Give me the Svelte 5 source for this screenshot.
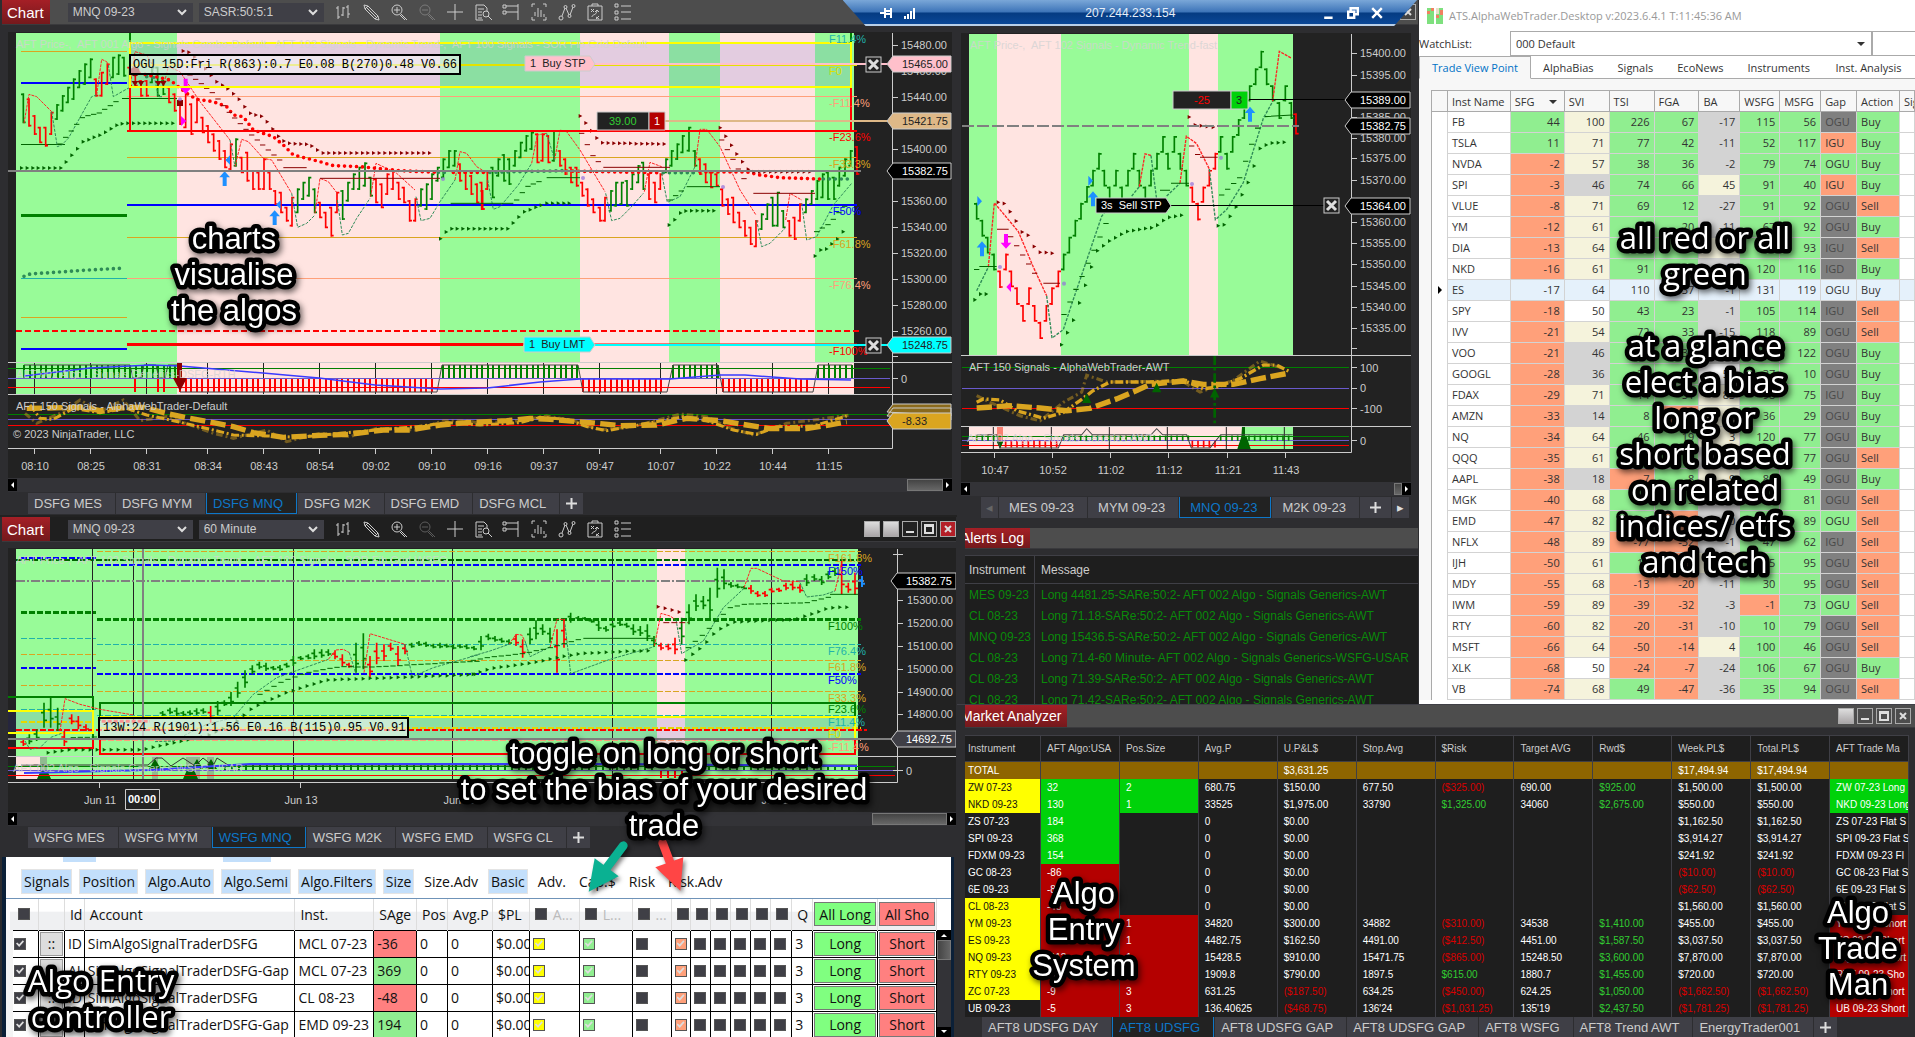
<script lang="ts">
  type Point = [number, number]
  type Bar = { x: number; hi: number; lo: number; c: string; up: boolean }

  // walk a polyline and return evenly spaced points along x
  function along(pts: Point[], step: number): Point[] {
    const out: Point[] = []
    let seg = 0
    for (let x = pts[0][0]; x <= pts[pts.length - 1][0]; x += step) {
      while (seg < pts.length - 2 && x > pts[seg + 1][0]) seg++
      const [x0, y0] = pts[seg]
      const [x1, y1] = pts[seg + 1]
      out.push([Math.round(x), Math.round(y0 + ((x - x0) / (x1 - x0)) * (y1 - y0))])
    }
    return out
  }

  function points(s: string): Point[] {
    return s.split(' ').map((p) => p.split(',').map(Number) as Point)
  }

  const triangles = (s: string, step: number) =>
    along(points(s), step).map(([x, y]) => `M${x - 5} ${y - 6}l11 6-11 6z`).join('')

  const dashes = (s: string, step: number) =>
    along(points(s), step).map(([x, y]) => `M${x - 8} ${y}h16`).join('')

  // "x,hi,lo" records; r/g/b switches the colour for what follows
  function bars(s: string): Bar[] {
    let c = 'g'
    const out: Bar[] = []
    for (const tok of s.split(' ')) {
      if (tok.length === 1) { c = tok; continue }
      const [x, hi, lo] = tok.split(',').map(Number)
      const prev = out[out.length - 1]
      out.push({ x, hi, lo, c, up: prev ? hi + lo < prev.hi + prev.lo : false })
    }
    return out
  }

  // fixed spacing variant: "hi,lo" records
  function spaced(s: string, x0: number, step: number): Bar[] {
    let i = 0
    return bars(s.split(' ').map((t) => (t.length === 1 ? t : `${Math.round(x0 + step * i++)},${t}`)).join(' '))
  }

  // open tick on the left, close tick on the right
  const barPath = (list: Bar[], c: string, tick: number) =>
    list.filter((b) => b.c === c)
      .map((b) => `M${b.x} ${b.hi}V${b.lo}M${b.x} ${b.hi + 3}h${b.up ? tick : -tick}M${b.x} ${b.lo - 3}h${b.up ? -tick : tick}`)
      .join('')

  const crossPath = (list: Bar[], c: string) =>
    list.filter((b) => b.c === c)
      .map((b) => `M${b.x} ${b.hi}V${b.lo}M${b.x - 9} ${Math.round(b.hi * 0.6 + b.lo * 0.4)}h9M${b.x} ${Math.round(b.hi * 0.3 + b.lo * 0.7)}h9`)
      .join('')

  function comb(from: number, to: number, step: number, y: number, h: number) {
    let d = ''
    for (let x = from; x <= to; x += step) d += `M${Math.round(x)} ${y}v${h}`
    return d
  }

  const dayLeft = spaced('g 280,370 r 295,380 345,405 380,430 380,440 335,405 g 312,360 285,335 260,310 235,300 210,265 190,255 175,235 r 235,290 215,290 190,255 g 170,235 163,225 170,230 r 200,260 205,260 240,290 240,290 g 200,250 200,290 240,285 r 260,310 280,335 300,375 265,385 310,405 295,370 350,400 375,430 400,455 420,480 450,505 430,510 g 415,500 r 470,520 455,545 510,570 515,570 475,570 515,570 570,615 575,640 620,665 590,680 g 565,640 545,600 530,590 565,640 r 605,655 635,685 620,710 575,640 g 570,660 545,605 520,570 500,570 487,560 530,590 r 535,610 550,625 520,585 510,570 545,600 560,610 600,665 595,665 g 565,620 550,630 520,600 500,545 475,535 450,505 450,500 r 490,545 515,570 525,585 550,610 570,630', 70, 16.8)
  const dayRight = bars('r 5,545,630 22,515,570 g 38,500,595 55,475,530 72,462,545 88,475,555 105,450,500 122,425,475 139,405,455 155,395,450 r 172,400,490 188,400,485 205,405,490 g 222,390,485 r 240,450,500 256,475,525 273,500,550 290,500,560 307,545,590 323,565,620 340,595,640 360,620,665 375,590,665 g 393,570,635 408,545,620 425,545,615 441,540,620 457,520,570 475,495,550 490,485,570 r 507,520,600 525,545,610 541,520,570 g 558,475,520 575,450,500 592,430,480 608,405,460 627,380,455 645,450,500 r 660,475,525 677,490,550 693,515,565 710,520,560 727,565,620 744,595,645 760,590,670 778,635,685 795,660,710 812,680,735 828,660,742 g 845,640,690 862,610,660 878,590,680 893,575,680 910,630,685 r 928,660,710 944,650,720 960,610,665 g 978,595,640 995,570,615 1012,540,600 1028,520,595 1044,515,600 1062,530,600 1078,500,560 1095,475,530 1112,450,500 r 1131,438,525')
  const hourLeft = bars('r 70,685,705 g 88,670,700 110,655,690 132,575,650 152,560,650 173,590,660 r 193,660,705 215,610,640 235,615,655 258,640,660 g 488,600,615 510,590,610 530,590,615 550,600,615 570,598,612 590,592,612 610,592,608 r 632,585,635 g 653,570,612 673,568,585 693,543,585 713,512,560 735,478,530 757,463,490 778,452,475 798,455,480 820,465,478 840,462,480 860,455,470 880,435,465 902,435,447 925,430,445 943,415,445 965,415,440 985,415,435 r 1005,418,445 1027,430,465 1047,455,470 g 1068,395,485 1090,367,475 r 1110,435,500 1130,395,460 1152,400,450 1172,395,420 1194,405,465 1215,400,430 g 1235,395,410 1257,390,405 1278,392,408 1300,398,412 1320,395,412 1340,398,410 1360,400,415 1380,400,412 1400,400,415')
  const hourRight = bars('g 12,405,418 33,375,418 55,368,388 75,375,392 95,380,395 117,385,400 r 138,370,405 158,385,440 g 180,350,400 198,328,385 218,340,372 240,350,395 r 261,355,485 282,325,410 g 302,305,335 325,315,330 345,318,328 365,325,335 386,330,360 408,345,362 428,335,350 450,330,345 470,335,350 490,340,372 511,345,375 532,340,390 552,375,408 r 573,395,418 595,398,418 615,380,430 g 635,320,400 657,280,340 678,250,300 700,255,295 720,230,325 742,170,260 762,175,235 783,213,230 803,218,232 822,225,235 r 843,222,248 863,240,258 885,240,258 905,230,245 927,230,243 948,215,238 968,210,238 990,220,245 g 1010,190,225 1033,190,210 1055,195,222 1075,180,205 1095,170,195 r 1115,150,250 1135,215,245 1155,185,252 b 1176,195,228')
  const renko = bars('g 80,600,650 97,650,700 113,700,750 132,750,800 r 150,800,852 168,750,800 184,800,850 201,850,902 219,902,952 237,850,902 254,902,952 271,952,1003 289,902,952 306,850,902 325,800,850 g 341,750,800 358,700,750 376,650,700 393,600,650 411,550,600 429,502,552 447,452,502 463,502,552 479,552,600 498,502,552 516,552,600 534,502,552 551,452,502 568,502,552 586,552,600 603,502,552 621,452,502 639,402,452 654,452,502 673,402,452 691,452,502 709,502,552 r 727,552,600 744,600,652 760,552,600 778,502,552 796,452,502 g 812,402,452 831,452,502 848,402,452 866,352,402 883,302,352 899,252,300 917,202,252 934,150,202 950,202,252 968,252,300 988,302,352 1006,252,300 1024,302,352 r 1038,335,398')

  const dayTimes: [number, string][] = [[34, '08:10'], [90, '08:25'], [146, '08:31'], [207, '08:34'], [263, '08:43'], [319, '08:54'], [375, '09:02'], [431, '09:10'], [487, '09:16'], [543, '09:37'], [599, '09:47'], [660, '10:07'], [716, '10:22'], [772, '10:44'], [828, '11:15']]
  const dayPrices: [number, string][] = [[45, '15480.00'], [71, '15460.00'], [97, '15440.00'], [149, '15400.00'], [201, '15360.00'], [227, '15340.00'], [253, '15320.00'], [279, '15300.00'], [305, '15280.00'], [331, '15260.00']]
  const dayFibs: [number, string, string][] = [[43, 'F11.4%', '#20b2aa'], [75, 'F0', '#dce000'], [107, '-F11.4%', '#ffa07a'], [141, '-F23.6%', '#f00'], [168, '-F33.3%', '#daa520'], [215, '-F50%', '#00f'], [248, '-F61.8%', '#daa520'], [289, '-F76.4%', '#ffa07a'], [355, '-F100%', '#f00']]
  const hourPrices: [number, string][] = [[599, '15300.00'], [622, '15200.00'], [645, '15100.00'], [668, '15000.00'], [691, '14900.00'], [713, '14800.00']]
  const hourFibs: [number, string, string][] = [[561, 'F161.8%', '#daa520'], [574, 'F150%', '#00f'], [629, 'F100%', '#008000'], [654, 'F76.4%', '#20b2aa'], [670, 'F61.8%', '#daa520'], [683, 'F50%', '#00f'], [701, 'F33.3%', '#daa520'], [712, 'F23.6%', '#008000'], [725, 'F11.4%', '#20b2aa'], [737, 'F0', '#dce000'], [750, '-F11.4%', '#ffa07a']]
  const renkoPrices: [number, string][] = [[53, '15400.00'], [75, '15395.00'], [117, '15385.00'], [138, '15380.00'], [158, '15375.00'], [180, '15370.00'], [222, '15360.00'], [243, '15355.00'], [264, '15350.00'], [286, '15345.00'], [307, '15340.00'], [328, '15335.00']]
  const renkoTimes: [number, string][] = [[994, '10:47'], [1052, '10:52'], [1110, '11:02'], [1168, '11:12'], [1227, '11:21'], [1285, '11:43']]

  // name, SFG, SVI, TSI, FGA, BA, WSFG, MSFG, gap, gap tone, action
  const watch: [string, number, number, number, number, number, number, number, string, string, string][] = [
    ['FB', 44, 100, 226, 67, -17, 115, 56, 'OGU', 'dim', 'Buy'],
    ['TSLA', 11, 71, 77, 42, -11, 52, 117, 'IGU', 'down', 'Buy'],
    ['NVDA', -2, 57, 38, 36, -2, 79, 74, 'OGU', 'up', 'Buy'],
    ['SPI', -3, 46, 74, 66, 45, 91, 40, 'IGU', 'down', 'Buy'],
    ['VLUE', -8, 71, 69, 12, -27, 91, 92, 'OGU', 'dim', 'Sell'],
    ['YM', -12, 61, 41, 20, -11, 67, 92, 'OGU', 'dim', 'Buy'],
    ['DIA', -13, 64, 42, 18, 7, 75, 93, 'IGU', 'dim', 'Sell'],
    ['NKD', -16, 61, 91, 54, -12, 120, 116, 'IGD', 'dim', 'Buy'],
    ['ES', -17, 64, 110, 37, -1, 131, 119, 'OGU', 'none', 'Buy'],
    ['SPY', -18, 50, 43, 23, -1, 105, 114, 'IGU', 'dim', 'Sell'],
    ['IVV', -21, 54, 72, 33, -15, 118, 89, 'OGU', 'dim', 'Sell'],
    ['VOO', -21, 46, 71, 31, -12, 104, 122, 'OGU', 'dim', 'Buy'],
    ['GOOGL', -28, 36, 21, 14, 50, 37, 10, 'OGU', 'dim', 'Buy'],
    ['FDAX', -29, 71, 14, 51, 83, 98, 75, 'IGU', 'dim', 'Buy'],
    ['AMZN', -33, 14, 8, -5, 12, 36, 29, 'OGU', 'dim', 'Buy'],
    ['NQ', -34, 64, 46, 19, 3, 120, 77, 'OGU', 'dim', 'Buy'],
    ['QQQ', -35, 61, 40, 12, -6, 112, 77, 'OGU', 'dim', 'Sell'],
    ['AAPL', -38, 18, -7, 8, 9, 85, 49, 'OGU', 'dim', 'Buy'],
    ['MGK', -40, 68, 31, 15, -8, 96, 81, 'OGU', 'dim', 'Sell'],
    ['EMD', -47, 82, 20, -11, -10, 44, 89, 'OGU', 'up', 'Sell'],
    ['NFLX', -48, 89, -77, -32, -1, 47, 62, 'IGU', 'dim', 'Sell'],
    ['IJH', -50, 61, 11, -8, 4, 35, 95, 'OGU', 'dim', 'Sell'],
    ['MDY', -55, 68, -13, -20, -11, 30, 95, 'OGU', 'dim', 'Sell'],
    ['IWM', -59, 89, -39, -32, -3, -1, 73, 'OGU', 'up', 'Sell'],
    ['RTY', -60, 82, -20, -31, -10, 10, 79, 'OGU', 'dim', 'Sell'],
    ['MSFT', -66, 64, -50, -14, 4, 100, 46, 'OGU', 'dim', 'Sell'],
    ['XLK', -68, 50, -24, -7, -24, 106, 67, 'OGU', 'dim', 'Buy'],
    ['VB', -74, 68, 49, -47, -36, 35, 94, 'OGU', 'dim', 'Sell'],
  ]
  const watchCols = ['Inst Name', 'SFG', 'SVI', 'TSI', 'FGA', 'BA', 'WSFG', 'MSFG', 'Gap', 'Action', 'Sig']

  function tone(col: number, v: number) {
    if (col === 1 || col === 4) return v === 50 ? 'none' : v > 50 || (col === 4 && v > 0) ? 'warm' : 'flat'
    return v > 0 ? 'up' : 'down'
  }

  const alerts = [
    ['MES 09-23', 'Long 4481.25-SARe:50:2- AFT 002 Algo - Signals Generics-AWT'],
    ['CL 08-23', 'Long 71.18-SARe:50:2- AFT 002 Algo - Signals Generics-AWT'],
    ['MNQ 09-23', 'Long 15436.5-SARe:50:2- AFT 002 Algo - Signals Generics-AWT'],
    ['CL 08-23', 'Long 71.4-60 Minute- AFT 002 Algo - Signals Generics-WSFG-USAR'],
    ['CL 08-23', 'Long 71.39-SARe:50:2- AFT 002 Algo - Signals Generics-AWT'],
    ['CL 08-23', 'Long 71.42-SARe:50:2- AFT 002 Algo - Signals Generics-AWT'],
  ]

  const marketCols = ['Instrument', 'AFT Algo:USA', 'Pos.Size', 'Avg.P', 'U.P&L$', 'Stop.Avg', '$Risk', 'Target AVG', 'Rwd$', 'Week.PL$', 'Total.PL$', 'AFT Trade Ma']
  const market = [
    ['ZW 07-23', '32', '2', '680.75', '$150.00', '677.50', '($325.00)', '690.00', '$925.00', '$1,500.00', '$1,500.00', 'ZW 07-23 Long'],
    ['NKD 09-23', '130', '1', '33525', '$1,975.00', '33790', '$1,325.00', '34060', '$2,675.00', '$550.00', '$550.00', 'NKD 09-23 Long'],
    ['ZS 07-23', '184', '', '0', '$0.00', '', '', '', '', '$1,162.50', '$1,162.50', 'ZS 07-23 Flat S'],
    ['SPI 09-23', '368', '', '0', '$0.00', '', '', '', '', '$3,914.27', '$3,914.27', 'SPI 09-23 Flat S'],
    ['FDXM 09-23', '154', '', '0', '$0.00', '', '', '', '', '$241.92', '$241.92', 'FDXM 09-23 Fl'],
    ['GC 08-23', '-86', '', '0', '$0.00', '', '', '', '', '($10.00)', '($10.00)', 'GC 08-23 Flat S'],
    ['6E 09-23', '-80', '', '0', '$0.00', '', '', '', '', '($62.50)', '($62.50)', '6E 09-23 Flat S'],
    ['CL 08-23', '-48', '', '0', '$0.00', '', '', '', '', '$1,560.00', '$1,560.00', 'CL 08-23 Flat S'],
    ['YM 09-23', '-12', '1', '34820', '$300.00', '34882', '($310.00)', '34538', '$1,410.00', '$455.00', '$455.00', 'YM 09-23 Short'],
    ['ES 09-23', '-17', '1', '4482.75', '$162.50', '4491.00', '($412.50)', '4451.00', '$1,587.50', '$3,037.50', '$3,037.50', 'ES 09-23 Short'],
    ['NQ 09-23', '-113', '1', '15428.5', '$910.00', '15471.75', '($865.00)', '15248.50', '$3,600.00', '$7,870.00', '$7,870.00', 'NQ 09-23 Short'],
    ['RTY 09-23', '-60', '2', '1909.8', '$790.00', '1897.5', '$615.00', '1880.7', '$1,455.00', '$720.00', '$720.00', 'RTY 09-23 Sho'],
    ['ZC 07-23', '-9', '3', '631.25', '($187.50)', '634.25', '($450.00)', '624.25', '$1,050.00', '($1,662.50)', '($1,662.50)', 'ZC 07-23 Short'],
    ['UB 09-23', '-5', '3', '136.40625', '($468.75)', "136'24", '($1,031.25)', "135'19", '$2,437.50', '($1,781.25)', '($1,781.25)', 'UB 09-23 Short'],
  ]
  const totals = ['TOTAL', '', '', '', '$3,631.25', '', '', '', '', '$17,494.94', '$17,494.94', '']

  function marketTone(row: string[], i: number) {
    const v = row[i]
    const long = !row[1].startsWith('-')
    if (i === 0) return (row[2] && row[0] !== 'UB 09-23') || row[0] === 'CL 08-23' ? 'yellow' : ''
    if (i === 1) return long ? 'long' : 'short'
    if (i === 2 || i === 11) return row[2] ? (long ? 'long' : 'short') : ''
    if (v.startsWith('(')) return 'loss'
    if (v && (i === 6 || i === 8)) return 'gain'
    return ''
  }

  const filters: [string, boolean][] = [['Signals', true], ['Position', true], ['Algo.Auto', true], ['Algo.Semi', true], ['Algo.Filters', true], ['Size', true], ['Size.Adv', false], ['Basic', true], ['Adv.', false], ['Cap.$', false], ['Risk', false], ['Risk.Adv', false]]
  const algos = [
    ['ID', 'SimAlgoSignalTraderDSFG', 'MCL 07-23', '-36'],
    ['AI', 'SimAlgoSignalTraderDSFG-Gap', 'MCL 07-23', '369'],
    ['ID', 'SimAlgoSignalTraderDSFG', 'CL 08-23', '-48'],
    ['AI', 'SimAlgoSignalTraderDSFG-Gap', 'EMD 09-23', '194'],
  ]
  const algoWidths = [29, 26, 20, 211, 79, 43, 31, 45, 37, 50, 53, 39, 20, 20, 20, 20, 20, 21, 21, 65, 59]

  const icons: { name: string; d: string; off?: boolean }[] = [
    { name: 'Bars', d: 'M4 3v13M2 5h2M4 14h2M9 4v9M7 12h2M9 5h2M14 2v13M12 4h2M14 11h2' },
    { name: 'Draw', d: 'M2 2l4 1 10 10-3 3L3 6zM6 3L3 6M5 5l9 9M16 13l1 4-4-1' },
    { name: 'Zoom in', d: 'M12 7A5 5 0 1 1 2 7a5 5 0 0 1 10 0zM7 4v6M4 7h6M11 11l6 6M10 12l5 5' },
    { name: 'Zoom out', d: 'M12 7A5 5 0 1 1 2 7a5 5 0 0 1 10 0zM4 7h6M11 11l6 6M10 12l5 5', off: true },
    { name: 'Crosshair', d: 'M9 1v16M1 9h16' },
    { name: 'Data box', d: 'M9 17H2V2h8l3 3v3M4 6h6M4 9h4M4 12h4M4 15h4M15 11a3 3 0 1 1-6 0 3 3 0 0 1 6 0zM14 13l4 4' },
    { name: 'Chart trader', d: 'M1 2h3v3H1zM4 3h12M16 1v16M4 9h12M1 8h3v3H1z' },
    { name: 'Properties', d: 'M5 1H2v3M13 1h3v3M5 17H2v-3M13 17h3v-3M5 13V9M8 14V5M11 14V7M14 14v-3' },
    { name: 'Indicators', d: 'M4 13l3-8M8 5l3 7M12 12l3-8M5 15a2 2 0 1 1-4 0 2 2 0 0 1 4 0zM9 4a1 1 0 1 1-3 0 1 1 0 0 1 3 0zM13 13a1 1 0 1 1-3 0 1 1 0 0 1 3 0zM17 3a1 1 0 1 1-3 0 1 1 0 0 1 3 0z' },
    { name: 'Strategies', d: 'M2 3h14v14H2zM6 3V1h6v2M5 6l3 3M8 6L5 9M10 14l3 2M13 13l-3 3M6 14c0-3 4-1 5-6M9 9l2-2 2 2' },
    { name: 'List', d: 'M1 1h3v3H1zM1 8h3v3H1zM1 14h3v3H1zM7 3h10M7 9h10M7 16h10' },
  ]
</script>

{#snippet chartBar(label: string, series: string, interval: string)}
  <div class="bar">
    <h2 class="plate">{label}</h2>
    <div class="pick">
      <select aria-label="{series} instrument"><option>MNQ 09-23</option></select>
      <svg viewBox="0 0 10 7"><path d="M1 1l4 4 4-4" /></svg>
    </div>
    <div class="pick">
      <select aria-label="{series} interval"><option>{interval}</option></select>
      <svg viewBox="0 0 10 7"><path d="M1 1l4 4 4-4" /></svg>
    </div>
    <div class="tools">
      {#each icons as icon}
        <button class="tool" class:off={icon.off} aria-label={icon.name}>
          <svg viewBox="0 0 18 18"><path d={icon.d} /></svg>
        </button>
      {/each}
    </div>
    <div class="space"></div>
    {#if series === 'Hourly'}
      <div class="winbtns">
        <button class="win pale" aria-label="Link instrument"></button>
        <button class="win pale" aria-label="Link interval"></button>
        <button class="win" aria-label="Minimize"><svg viewBox="0 0 14 14"><path d="M3 10h8" /></svg></button>
        <button class="win" aria-label="Maximize"><svg viewBox="0 0 14 14"><path d="M3 3h8v8H3zM3 4h8" /></svg></button>
        <button class="win red" aria-label="Close"><svg viewBox="0 0 14 14"><path d="M4 4l6 6M10 4l-6 6" /></svg></button>
      </div>
    {/if}
  </div>
{/snippet}

{#snippet tabs(list: string[], active: number, kind: string)}
  <div class="tabs {kind}">
    {#if kind === 'roomy'}<button class="tab nudge" aria-label="Previous tabs">◂</button>{/if}
    {#each list as name, i}
      <button class="tab" class:active={i === active}>{name}</button>
    {/each}
    <button class="tab plus" aria-label="Add tab">
      <svg viewBox="0 0 11 11"><path d="M5.5 0v11M0 5.5h11" /></svg>
    </button>
    {#if kind === 'roomy'}<button class="tab nudge lit" aria-label="More tabs">▸</button>{/if}
  </div>
{/snippet}

{#snippet scroller(kind: string)}
  <div class="scroller">
    <button aria-label="Scroll left"><svg viewBox="0 0 9 12"><path d="M6 3v6L3 6z" /></svg></button>
    <div class="space"></div>
    <div class="thumb {kind}"></div>
    <button aria-label="Scroll right"><svg viewBox="0 0 9 12"><path d="M3 3v6l3-3z" /></svg></button>
  </div>
{/snippet}

{#snippet caption(place: string, lines: string[])}
  <svg class="caption {place}" width="1" height="1">
    {#each lines as line, i}
      <text x="0" y={30 + i * 36}>{line}</text>
    {/each}
  </svg>
{/snippet}

{#snippet tag(x: number, y: number, right: number, label: string, fill: string, color: string)}
  <g>
    <path d="M{x} {y}l6-8H{right}v16H{x + 6}z" {fill} stroke="#ccc" />
    <text x={x + 15} y={y + 4} fill={color}>{label}</text>
  </g>
{/snippet}

{#snippet cross(x: number, y: number)}
  <g>
    <rect {x} {y} width="15" height="15" fill="#222" stroke="#ccc" />
    <path d="M{x + 3} {y + 3}l9 9m0-9l-9 9" stroke="#ddd" stroke-width="3" />
  </g>
{/snippet}

<div class="workspace">
  <div class="left">
    <section class="window day">
      {@render chartBar('Chart', 'Daily', 'SASR:50:5:1')}
      <div class="frame">
        <svg class="chart" viewBox="8 32 944 446" role="img" aria-label="MNQ SASR chart">
          <rect x="8" y="32" width="944" height="446" fill="#222" />
          <path d="M16 33H854V362H16z" fill="#98fb98" />
          <path d="M177 33H440V362H177zM580 33h89V362h-89zM720 33h95V362h-95z" fill="#ffe4e1" />
          <path d="M16 363H177V394H16z" fill="#98fb98" />
          <path d="M177 363H854V394H177z" fill="#ffe4e1" />
          <rect x="130" y="43" width="721" height="44" fill="rgb(70 64 219 / .15)" />
          <g fill="none" stroke-width="1">
            <path d="M21 51.5H127M21 317.5H127M127 157.5H857M127 237.5H857" stroke="#daa520" />
            <path d="M127 96.5H857M127 278.5H857" stroke="#ffa07a" />
            <path d="M21 278.5H127" stroke="#20b2aa" />
            <path d="M21 144.5H65M122 98.5H177" stroke="#006400" />
            <path d="M21 83H127M21 349H127M127 205H857" stroke="#00f" stroke-width="2" />
            <path d="M21 215.500H127" stroke="#008000" stroke-width="3" />
            <path d="M16 331H861" stroke="#f00" stroke-width="2" stroke-dasharray="6 3" />
            <path d="M127 344.5H523" stroke="#f00" stroke-width="3" />
            <path d="M523 344H857" stroke="#f00" />
            <path d="M130 33V56" stroke="#008000" stroke-width="2" />
            <path d="M851 33V43" stroke="#008000" stroke-width="2" />
          </g>
          <g transform="scale(.33333)" fill="none">
            <path d={barPath(dayLeft, 'g', 7)} stroke="#008000" stroke-width="5" />
            <path d={barPath(dayLeft, 'r', 7)} stroke="#f00" stroke-width="5" />
            <g transform="translate(1440)">
              <path d={barPath(dayRight, 'g', 7)} stroke="#008000" stroke-width="5" />
              <path d={barPath(dayRight, 'r', 7)} stroke="#f00" stroke-width="5" />
            </g>
            <path d="M72 370L87 283 110 290 155 335M290 285L305 178 320 185 325 195M390 262L405 155 440 165 455 190M490 260L505 200 540 215 600 305 690 420M705 500L725 418 745 425 790 475 815 480 875 580M945 640L960 535 985 545 1012 580M1112 590L1128 490 1160 505 1190 520 1245 570M1365 540L1380 455 1400 460 1430 500 1463 520M1595 490L1612 405 1640 400M1664 480L1680 390 1700 395 1740 450 1815 575M1933 575L1950 487 1985 500M2085 500L2100 388 2120 388 2160 440 2220 570 2268 645M2357 660L2370 580 2405 600" stroke="#f22" stroke-width="3" stroke-dasharray="9 3" />
            <path d="M155 335L172 440 185 435 205 415 275 290 290 285M325 195L340 290 375 270 390 262M455 190L475 290 490 290M690 420L705 500M875 580L893 682 920 670 945 645M1012 600L1027 705 1045 700 1070 655 1110 595M1248 590L1263 662 1290 655 1320 605 1365 540M1463 540L1480 628 1500 620 1555 555 1595 490M1640 400L1664 480M1817 580L1835 662 1860 655 1890 625 1930 580M1985 520L2002 607 2040 590 2085 500M2270 660L2285 740 2310 730 2355 685M2405 610L2420 720 2450 710 2500 615 2555 550" stroke="#2e8b57" stroke-width="3" stroke-dasharray="9 4" />
            <g stroke-width="11" stroke-linecap="round" stroke-dasharray="0 18">
              <path d="M72 829L90 822 250 811 375 804M440 230L470 234M1315 517H1350M1470 517L1690 512M1990 518H2090M2470 537H2560" stroke="#2e8b57" />
              <path d="M400 215L510 240 560 280 590 298 640 305 680 320 700 345 730 350 760 390 820 410 850 435 880 465 960 485 1000 497 1080 500 1200 512 1310 517M1360 517H1460M1700 513L1980 518M2100 516H2240L2280 525 2340 533 2460 537" stroke="#f00" />
            </g>
            <g stroke="none">
              <path d={triangles('65,504 185,504 250,425 310,402 345,378 370,370 520,370', 16.8)} fill="#006400" />
              <path d={triangles('1322,716 1340,695 1355,686 1525,686 1570,637 1640,610 1725,610', 16.8) + triangles('2008,675 2027,657 2042,638 2060,632 2145,632', 16.8) + triangles('2446,768 2462,750 2480,747 2515,715 2545,675', 16.8)} fill="#006400" />
              <path d={triangles('550,153 565,155 600,185 650,245 690,270 720,300 750,340 790,350 835,408 860,430 930,433 965,459 1305,459', 16.8) + triangles('1741,348 1757,368 1792,415 1810,429 1998,432', 16.8) + triangles('2161,383 2177,408 2210,460 2245,508 2260,515 2430,515', 16.8)} fill="#8b0000" />
              <path d="M395 243h20l-10 16zM413 243h20l-10 16zM465 243h20l-10 16zM480 243h20l-10 16zM531 300h18v18h-18z" fill="#8b0000" />
              <circle cx="405" cy="215" r="14" fill="#8b0000" />
              <path d="M551 236h12v28h10l-16 18-16-18h10zM543 348l16 15-16 15z" fill="#f0f" />
              <path d="M668 558h12v-26h10l-16-18-16 18h10zM818 675h12v-26h10l-16-18-16 18h10zM690 466v28l-14-14zM842 600v28l-14-14z" fill="#1e90ff" />
              <g fill="#9370db" opacity=".7"><circle cx="540" cy="298" r="6" /><circle cx="1329" cy="537" r="6" /><circle cx="1749" cy="534" r="6" /><circle cx="2169" cy="561" r="6" /></g>
            </g>
            <path d={dashes('180,432 250,350 300,338 360,297', 16.8) + 'M1352 610H1540' + dashes('1550,600 1580,560 1630,540', 16.8) + 'M1640 533H1740' + dashes('2010,600 2060,560', 16.8) + 'M2060 560H2160' + dashes('2450,695 2490,670 2550,600', 16.8)} stroke="#006400" stroke-width="3" />
            <path d={dashes('570,225 640,280 690,340 760,410 850,490', 16.8) + 'M850 503H920M960 535H1320' + dashes('1745,400 1780,470 1800,490', 16.8) + 'M1810 502H2010' + dashes('2165,420 2240,550', 16.8) + 'M2260 580H2445'} stroke="#8b0000" stroke-width="3" />
          </g>
          <path d="M8 171H861" stroke="#808080" stroke-width="2" />
          <path d="M130 131V87M127 131H857M851 87V131" fill="none" stroke="#f00" stroke-width="2" />
          <path d="M130 87V43H851V87z" fill="none" stroke="#ff0" stroke-width="2" />
          <path d="M130 65H857" stroke="#e2e200" stroke-width="2" />
          <path d="M595 64H887" stroke="#ffc0cb" stroke-width="2" />
          <path d="M665 121H887" stroke="#deb887" stroke-width="2" />
          <path d="M595 345H887" stroke="#0ff" stroke-width="2" />
          <!-- histogram pane -->
          <path d={dayTimes.map(([x]) => `M${x}.5 363V394`).join('')} stroke="#222" />
          <path d={comb(24, 180, 5.6, 365, 13) + comb(443, 578, 5.6, 365, 13) + comb(673, 718, 5.6, 365, 13) + comb(818, 852, 5.6, 365, 13)} stroke="#008000" stroke-width="2" />
          <path d={comb(135, 140, 5.6, 378, 14) + comb(158, 164, 5.6, 378, 14) + comb(180, 437, 5.6, 378, 14) + comb(583, 667, 5.6, 378, 14) + comb(723, 812, 5.6, 378, 14)} stroke="#f00" stroke-width="2" />
          <path d="M24 365H130l3 13h8l3-13h12l3 13h6l3-13h10M180 392H437l5-27H578l5 27h84l6-27h45l5 27h90l5-27h34" fill="none" stroke="#444" />
          <path d="M8 368.5H890" stroke="#008000" />
          <path d="M8 378.5H890" stroke="#6a5acd" />
          <path d="M8 387.5H890" stroke="#f00" />
          <path d="M24 376L90 368 150 365 180 366 263 373 319 378 375 385 440 389 487 388 540 382 580 379 670 379 720 375 745 375 800 379 851 380" fill="none" stroke="#3a3aff" stroke-width="1.500" />
          <path d="M177 363h5v15h5l-7 13-7-13h4z" fill="#8b0000" />
          <!-- oscillator pane -->
          <path d="M8 414.5H890" stroke="#008000" />
          <path d="M8 419.5H890" stroke="#6a5acd" />
          <path d="M8 425.5H890" stroke="#f00" />
          <g transform="scale(.33333)" fill="none" stroke="#daa520">
            <path d="M75 1240L110 1270 180 1240 240 1200 300 1235 370 1200 420 1262 500 1250 640 1300 700 1315 800 1290 860 1325 960 1300 1050 1310 1130 1285 1250 1290 1330 1262 1400 1262 1440 1270 1560 1262 1640 1248 1720 1262 1800 1290 1900 1280 2040 1242 2120 1250 2180 1280 2260 1305 2360 1270 2440 1260 2550 1245" stroke-width="9" opacity=".45" stroke-dasharray="20 9 6 9" />
            <path d="M90 1215L120 1255 160 1258 220 1225 300 1238 380 1225 440 1245 520 1262 640 1290 700 1305 800 1308 900 1312 1020 1300 1130 1290 1250 1280 1340 1268 1440 1275 1560 1268 1620 1252 1700 1258 1760 1280 1820 1292 1900 1278 2050 1250 2120 1262 2200 1290 2270 1303 2330 1280 2440 1278 2540 1248" stroke-width="9" stroke-dasharray="24 8 6 8" />
            <path d="M80 1225L250 1222 300 1232 380 1222 430 1222 500 1240 560 1253 640 1268 700 1280 760 1298 850 1312 960 1306 1050 1303 1150 1290 1230 1290 1320 1275 1400 1268 1520 1262 1590 1255 1650 1258 1770 1268 1860 1277 1970 1275 2060 1255 2160 1262 2240 1275 2310 1286 2420 1286 2490 1275 2540 1265" stroke-width="16" stroke-dasharray="46 16" />
          </g>
          <g class="wire">
            <path d="M8 362.5H952M8 394.5H952M8 448.5H892.500V33" />
            <path d={dayTimes.map(([x]) => `M${x}.5 449v5`).join('') + dayPrices.map(([y]) => `M893 ${y}.5h5`).join('') + 'M893 356.5h5M893 378.5h5'} />
          </g>
          <g class="axis">
            {#each dayTimes as [x, label]}<text x={x + 1} y="470" text-anchor="middle">{label}</text>{/each}
            {#each dayPrices as [y, label]}<text x="901" y={y + 4}>{label}</text>{/each}
            <text x="901" y="383">0</text>
            {#each dayFibs as [y, label, color]}<text x="829" {y} fill={color}>{label}</text>{/each}
            <text class="ghost" x="16" y="48">AFT Price-,&nbsp; AFT 001 Algo - Signals Combo-Default,&nbsp; AFT 102 Signals - Dynamic Trend-,&nbsp; AFT 100 Signals - SOR Fib Grid-Default</text>
            <text class="ghost" x="16" y="378">AFT 002 Algo - Signals Generics-DSFG-RTH</text>
            <text x="16" y="410">AFT 150 Signals - AlphaWebTrader-Default</text>
            <text x="13" y="438">© 2023 NinjaTrader, LLC</text>
            <path d="M887 412l6-8H951v12zM887 416l6-8H951v12z" fill="#8a6a1c" stroke="#ccc" />
            {@render tag(887, 64, 951, '15465.00', '#ffc0cb', '#222')}
            {@render tag(887, 121, 951, '15421.75', '#deb887', '#222')}
            {@render tag(887, 171, 951, '15382.75', '#000', '#fff')}
            {@render tag(887, 345, 951, '15248.75', '#0ff', '#222')}
            {@render tag(887, 421, 951, '-8.33', '#daa520', '#222')}
            {@render cross(866, 57)}
            {@render cross(866, 338)}
            <path d="M525 56h65l5 8-5 7h-65z" fill="#ffc0cb" stroke="#ccc" />
            <text x="530" y="67" fill="#222">1&nbsp; Buy STP</text>
            <path d="M524 337h66l5 8-5 7h-66z" fill="#0ff" stroke="#ccc" />
            <text x="529" y="348" fill="#222">1&nbsp; Buy LMT</text>
            <path d="M597 112h52v18h-52z" fill="#222" stroke="#ccc" />
            <path d="M649 112h16v18h-16z" fill="#b40000" stroke="#ccc" />
            <text x="609" y="125" fill="#32cd32">39.00</text>
            <text x="654" y="125" fill="#fff">1</text>
          </g>
          <rect x="130" y="55" width="330" height="19" fill="#f5f5f5" fill-opacity=".6" stroke="#000" stroke-width="2" />
          <text class="mono" x="133" y="68">OGU 15D:Fri R(863):0.7 E0.08 B(270)0.48 V0.66</text>
        </svg>
        {@render scroller('short')}
      </div>
      {@render tabs(['DSFG MES', 'DSFG MYM', 'DSFG MNQ', 'DSFG M2K', 'DSFG EMD', 'DSFG MCL'], 2, 'tight')}
      {@render caption('over-day', ['charts', 'visualise', 'the algos'])}
    </section>

    <section class="window hour">
      {@render chartBar('Chart', 'Hourly', '60 Minute')}
      <div class="frame">
        <svg class="chart" viewBox="8 547 948 264" role="img" aria-label="MNQ 60 minute chart">
          <rect x="8" y="547" width="948" height="264" fill="#222" />
          <path d="M16 548H858V778H16z" fill="#98fb98" />
          <path d="M657 548h28v207h-28zM16 756h31v22H16z" fill="#ffe4e1" />
          <path d="M8 710H93v22H8zM100 716H855v22H100z" fill="rgb(70 64 219 / .15)" />
          <path d="M92.500 548V778M133.500 548V778M293.500 548V778M452.500 548V778M612.500 548V778M771.500 548V778" stroke="#222" />
          <g fill="none" stroke-dasharray="6 2">
            <path d="M97 550.5H861M97 659.5H861M97 690.5H861M21 653.5H96M21 684.5H96" stroke="#daa520" />
            <path d="M97 643.5H861M97 714.5H861M21 637.5H96M21 708.5H96" stroke="#20b2aa" />
            <path d="M16 559H864" stroke="#006400" stroke-width="2" />
            <path d="M21 557H96M97 564H861M21 667H96M97 673H861" stroke="#00f" stroke-width="2" />
            <path d="M21 611.500H96M97 618.500H861" stroke="#008000" stroke-width="3" />
            <path d="M16 580H864" stroke="#808080" stroke-width="2" stroke-dasharray="9 2 2 2" />
            <path d="M100 739.5H861" stroke="#ffa07a" />
            <path d="M21 721H93M100 727H861" stroke="#e6d800" stroke-width="2" />
            <path d="M16 729H867" stroke="#f00" stroke-width="2" />
          </g>
          <path d="M8 696H93V747M100 720V702H855V738" fill="none" stroke="#008000" stroke-width="2" />
          <path d="M8 747H93V738M100 738V753H855V738" fill="none" stroke="#f00" stroke-width="2" />
          <path d="M8 710H93V732H8M100 716H855V737" fill="none" stroke="#ff0" stroke-width="2" />
          <g transform="translate(0 510) scale(.33333)" fill="none">
            <path d={crossPath(hourLeft, 'g')} stroke="#008000" stroke-width="5" />
            <path d={crossPath(hourLeft, 'r')} stroke="#f00" stroke-width="5" />
            <path d="M305 631H450" stroke="#f00" stroke-width="9" stroke-dasharray="12 6" />
            <path d="M180 660L195 563 240 580 300 595 400 612M985 445L1008 417 1030 415 1048 425M1092 485L1110 368 1215 400" stroke="#f22" stroke-width="3" stroke-dasharray="9 3" />
            <path d="M75 690L90 715 120 710 150 680 190 665M465 692L520 690 620 640 700 620 760 550 830 500 985 445M1048 425L1068 490M1215 400L1237 497 1300 470 1440 430" stroke="#2e8b57" stroke-width="3" stroke-dasharray="9 4" />
            <path d={dashes('220,680 290,678', 21) + dashes('780,550 850,510 920,485 1020,467 1120,468 1440,450', 21)} stroke="#006400" stroke-width="3" />
            <path d={triangles('145,725 210,716 430,716 500,700 620,675 700,640 760,590 860,545 980,507 1180,500 1430,490', 21)} fill="#006400" />
          </g>
          <g transform="translate(470 510) scale(.33333)" fill="none">
            <path d={crossPath(hourRight, 'g')} stroke="#008000" stroke-width="5" />
            <path d={crossPath(hourRight, 'r')} stroke="#f00" stroke-width="5" />
            <path d={crossPath(hourRight, 'b')} stroke="#1e90ff" stroke-width="6" />
            <path d="M117 400L138 370 155 372 165 390M240 410L261 325 285 325M553 405L573 307 600 315 615 325M822 230L843 172 860 172 940 210 990 212M1095 240L1115 155" stroke="#f22" stroke-width="3" stroke-dasharray="9 3" />
            <path d="M0 437L60 420 117 400M165 390L180 437 240 408M285 340L302 488 420 445 550 408M618 325L635 428 700 390 760 290 822 232M990 215L1010 258 1060 252 1095 240" stroke="#2e8b57" stroke-width="3" stroke-dasharray="9 3" />
            <path d={dashes('10,448 70,437 160,428 240,410 330,385', 21) + 'M340 382H550' + dashes('655,410 700,370 780,290 820,280 1010,275 1080,258', 21) + 'M1080 250H1164'} stroke="#006400" stroke-width="3" />
            <path d={triangles('10,490 60,473 180,457 260,440 340,427 550,418', 21) + triangles('648,447 700,405 740,360 790,333 980,325 1080,290 1150,288', 21)} fill="#006400" />
            <path d={triangles('565,287 630,303', 21)} fill="#8b0000" />
            <path d="M580 335H655" stroke="#8b0000" stroke-width="3" stroke-dasharray="18 6" />
          </g>
          <!-- histogram pane -->
          <path d={comb(225, 652, 7, 764, 6) + comb(688, 856, 7, 764, 6)} stroke="#008000" stroke-width="2" />
          <path d={comb(661, 684, 7, 770, 7)} stroke="#f00" stroke-width="2" />
          <path d="M40 756h7v22h-7zM152 756h6v22h-6zM186 756h14v22h-14zM207 756h7v22h-7z" fill="#8fbc8f" />
          <path d="M37 778l4-9h6l4 9zM183 778l4-9h7l4 9zM149 768l6-10 6 10zM191 768l6-10 6 10zM205 768l6-10 6 10z" fill="#006400" />
          <path d="M21 764H148l8-7h6l9 8 12-8 12 8 8-8 10 8 4-8 11 7H857" fill="none" stroke="#333" />
          <path d="M8 765.500H895" stroke="#008000" />
          <path d="M8 769.500H895" stroke="#6a5acd" />
          <path d="M8 774.500H895" stroke="#f00" />
          <path d="M24 772L150 769 250 763H620L857 765" fill="none" stroke="#3a3aff" stroke-width="2" />
          <path d="M8 738H892M143 548V778" stroke="#808080" stroke-width="2" />
          <g class="wire">
            <path d="M8 755.500H956M8 781.500H897.500V548" />
            <path d={'M99.500 782v5M300.500 782v5M893 553.500h10M893 769.500h10' + hourPrices.map(([y]) => `M898 ${y}.5h5`).join('')} />
          </g>
          <g class="axis">
            {#each hourPrices as [y, label]}<text x="907" y={y + 4}>{label}</text>{/each}
            <text x="906" y="774">0</text>
            {#each hourFibs as [y, label, color]}<text x="828" {y} fill={color}>{label}</text>{/each}
            <text x="100" y="803" text-anchor="middle">Jun 11</text>
            <text x="301" y="803" text-anchor="middle">Jun 13</text>
            <text x="460" y="803" text-anchor="middle">Jun 15</text>
            <text x="778" y="803" text-anchor="middle">Jun 19</text>
            <text class="ghost" x="16" y="563">AFT Price-,&nbsp; AFT 102 Signals - Dynamic Trend-,&nbsp; AFT 100 Signals - SOR Fib Grid-WSFG</text>
            <text class="ghost" x="13" y="771">AFT 002 Algo - Signals Generics-WSFG-USAR</text>
            {@render tag(891, 580, 956, '15382.75', '#000', '#fff')}
            {@render tag(891, 738, 956, '14692.75', '#3f3f46', '#fff')}
            <path d="M125.500 788.500h34v20h-34z" fill="#222" stroke="#ccc" />
            <text class="strong" x="142" y="802" text-anchor="middle" fill="#fff">00:00</text>
          </g>
          <rect x="99" y="717" width="309" height="19" fill="#f5f5f5" fill-opacity=".6" stroke="#000" stroke-width="2" />
          <text class="mono" x="103" y="730">13W:24 R(1901):1.56 E0.16 B(115)0.95 V0.91</text>
        </svg>
        {@render scroller('long')}
      </div>
      {@render tabs(['WSFG MES', 'WSFG MYM', 'WSFG MNQ', 'WSFG M2K', 'WSFG EMD', 'WSFG CL'], 2, 'tight')}
      {@render caption('over-hour', ['toggle on long or short', 'to set the bias of your desired', 'trade'])}
      <svg class="pointers" viewBox="0 0 300 165" aria-hidden="true">
        <path d="M112 20L58 92" stroke="#0ab192" />
        <path d="M8 158L26 58 98 112z" fill="#0ab192" />
        <path d="M230 12L255 78" stroke="#ff4545" />
        <path d="M283 155L208 85 292 55z" fill="#ff4545" />
      </svg>
    </section>

    <section class="controller">
      <div class="cut"><span></span><span></span></div>
      <div class="filters">
        {#each filters as [name, on]}
          <button class="filter" class:on>{name}</button>
        {/each}
      </div>
      <div class="algo-body">
        <table class="algos">
          <colgroup>{#each algoWidths as w}<col style="width:{(w / 929) * 100}%" />{/each}</colgroup>
          <thead>
            <tr>
              <th class="mid"><input type="checkbox" class="box" aria-label="Select all" /></th>
              <th></th><th>Id</th><th>Account</th><th>Inst.</th><th>SAge</th><th>Pos</th><th>Avg.P</th><th>$PL</th>
              {#each ['A...', 'L...', '...'] as name}
                <th><label class="colbox"><input type="checkbox" class="box" />{name}</label></th>
              {/each}
              {#each [1, 2, 3, 4, 5, 6] as n}
                <th><input type="checkbox" class="box" aria-label="Column option {n}" /></th>
              {/each}
              <th>Q</th>
              <th class="act"><button class="side long">All Long</button></th>
              <th class="act"><button class="side short">All Sho</button></th>
            </tr>
          </thead>
          <tbody>
            {#each algos as [id, account, inst, age]}
              <tr>
                <td class="mid"><input type="checkbox" class="box" checked aria-label="Enable {inst}" /></td>
                <td class="act"><button class="dots" aria-label="Row menu">::</button></td>
                <td>{id}</td><td>{account}</td><td>{inst}</td>
                <td class="age" class:neg={age.startsWith('-')}>{age}</td>
                <td>0</td><td>0</td><td>$0.00</td>
                <td><input type="checkbox" class="box yellow" checked aria-label="Auto" /></td>
                <td><input type="checkbox" class="box green" checked aria-label="Long" /></td>
                <td><input type="checkbox" class="box" aria-label="Short" /></td>
                <td><input type="checkbox" class="box orange" checked aria-label="Option 1" /></td>
                {#each [2, 3, 4, 5, 6] as n}
                  <td><input type="checkbox" class="box" aria-label="Option {n}" /></td>
                {/each}
                <td>3</td>
                <td class="act"><button class="side long">Long</button></td>
                <td class="act"><button class="side short">Short</button></td>
              </tr>
            {/each}
          </tbody>
        </table>
        <div class="vscroll">
          <button aria-label="Scroll up"><svg viewBox="0 0 13 10"><path d="M4 7h6L7 4z" /></svg></button>
          <div class="vthumb"></div>
          <div class="space"></div>
          <button aria-label="Scroll down"><svg viewBox="0 0 13 10"><path d="M4 3h6L7 6z" /></svg></button>
        </div>
      </div>
      {@render caption('over-controller', ['Algo Entry', 'controller'])}
    </section>
  </div>

  <div class="right">
    <div class="upper">
      <div class="middle">
        <section class="window renko">
          <div class="bar"><div class="space"></div><button class="win corner" aria-label="Close chart"><svg viewBox="0 0 14 14"><path d="M4 4l6 6M10 4l-6 6" /></svg></button></div>
          <div class="frame">
            <svg class="chart" viewBox="961 33 450 449" role="img" aria-label="MNQ SARe chart">
              <rect x="961" y="33" width="450" height="449" fill="#222" />
              <path d="M969 34H1293V355H969z" fill="#98fb98" />
              <path d="M997 34h64V355h-64zM1189 34h29V355h-29zM969 427H1243V449H969z" fill="#ffe4e1" />
              <path d="M1243 427H1293V449H1243z" fill="#98fb98" />
              <g transform="translate(950) scale(.33333 .33806)" fill="none">
                <path d={barPath(renko, 'g', 8)} stroke="#008000" stroke-width="5" />
                <path d={barPath(renko, 'r', 8)} stroke="#f00" stroke-width="5" />
                <path d="M115 790L133 600 205 685 250 790 290 875M568 552L585 455 603 460M690 542L709 403 740 425 778 500M968 300L988 152 1024 172" stroke="#f22" stroke-width="4" stroke-dasharray="9 3" />
                <path d="M80 860L115 790M290 875L306 1000 340 975 365 900 455 640 470 620M545 580L568 552M603 460L620 590M650 580L690 542M778 500L796 650 830 620 880 540 940 350 968 300" stroke="#2e8b57" stroke-width="4" stroke-dasharray="9 4" />
                <path d={triangles('75,887 90,870 125,870', 17) + triangles('335,1020 370,950 405,850 440,745 475,715 530,685 615,672 650,645 700,636', 18) + triangles('805,668 825,665 860,610 900,530 930,440 960,423 1020,420', 18)} fill="#006400" />
                <path d={triangles('145,598 160,598 195,645 212,685 232,690 262,745 320,750', 18) + triangles('718,346 735,370 790,376', 18)} fill="#8b0000" />
                <path d={'M88 788H140M72 797h16' + dashes('342,930 400,810 480,635', 18) + 'M630 563H660M663 542H717M945 345L1028 340' + dashes('815,577 870,525 900,440 930,360', 18)} stroke="#006400" stroke-width="3" />
                <path d={'M141 678H176M280 838H330M750 465H803' + dashes('182,700 270,832', 18) + dashes('725,432 745,460', 18)} stroke="#8b0000" stroke-width="3" />
                <path d="M90 758h12v-26h10l-16-18-16 18h10zM423 610h12v-26h10l-16-18-16 18h10zM894 360h12v-26h10l-16-18-16 18h10zM82 580l14 15-14 15zM415 520l14 15-14 15z" fill="#1e90ff" />
                <path d="M162 692h12v26h10l-16 18-16-18h10zM183 834v30l-14-15z" fill="#f0f" />
                <g fill="#9370db" opacity=".7"><circle cx="150" cy="790" r="6" /><circle cx="342" cy="839" r="6" /><circle cx="726" cy="544" r="6" /><circle cx="813" cy="467" r="6" /></g>
              </g>
              <path d="M962 126H1299" stroke="#808080" stroke-width="2" stroke-dasharray="12 3" />
              <path d="M1249 99.500H1345M1171 205.500H1324" stroke="#000" />
              <!-- oscillator pane -->
              <path d="M962 367.500H1349" stroke="#008000" />
              <path d="M962 388.500H1349M962 440.500H1349" stroke="#6a5acd" />
              <path d="M962 408.500H1349M962 445.500H1349" stroke="#f00" />
              <g transform="translate(950) scale(.33333 .33806)" fill="none" stroke="#daa520">
                <path d="M80 1170L120 1190 210 1230 270 1245 340 1190 395 1160 410 1110 470 1130 620 1128 700 1130 750 1160 850 1125 930 1068 1000 1090" stroke-width="9" opacity=".45" stroke-dasharray="20 9 6 9" />
                <path d="M80 1190L100 1180 150 1183 200 1215 280 1237 340 1220 390 1185 430 1155 480 1130 600 1130 700 1125 760 1150 800 1145 870 1120 940 1080 980 1080 1020 1100" stroke-width="10" stroke-dasharray="24 8 6 8" />
                <path d="M80 1207L180 1200 270 1207 350 1215 420 1208 500 1180 560 1155 600 1137 700 1127 760 1137 850 1137 930 1120 1020 1103" stroke-width="16" stroke-dasharray="46 14" />
                <path d="M794 1052V1252" stroke="#006400" stroke-width="8" stroke-dasharray="28 8 8 8" />
                <path d="M396 1192l14-28 14 28zM606 1160l14-28 14 28zM780 1176l14-28 14 28z" fill="#006400" stroke="none" />
                <path d="M130 1262v66M304 1262v66M478 1262v66M652 1262v66M829 1262v66M1003 1262v66" stroke="#222" stroke-width="3" />
                <path d={comb(80, 140, 17, 1288, 16) + comb(341, 715, 17, 1288, 16) + comb(812, 1028, 17, 1288, 16)} stroke="#008000" stroke-width="5" />
                <path d={comb(150, 325, 17, 1304, 20) + comb(727, 796, 17, 1304, 20)} stroke="#f00" stroke-width="5" />
                <path d="M141 1262h18v40h-18z" fill="#fa8072" stroke="none" />
                <path d="M140 1306h20l-10 22zM876 1262h9v30h5l12 36h-40l12-36z" fill="#006400" stroke="none" />
                <path d="M80 1286H140L150 1325H325L341 1286H395L410 1268 427 1286H603L620 1268 638 1286H710L724 1325H780L812 1286H1028" stroke="#444" stroke-width="3" />
              </g>
              <path d="M962 436.500H1349" stroke="#008000" />
              <g class="wire">
                <path d="M961 355.500H1411M961 426.500H1411M961 452.500H1351.500V34" />
                <path d={renkoTimes.map(([x]) => `M${x}.5 453v5`).join('') + renkoPrices.map(([y]) => `M1352 ${y}.5h5`).join('') + 'M1352 348.500h5M1352 367.500h5M1352 388.500h5M1352 408.500h5M1352 440.500h5'} />
              </g>
              <g class="axis">
                {#each renkoTimes as [x, label]}<text x={x + 1} y="474" text-anchor="middle">{label}</text>{/each}
                {#each renkoPrices as [y, label]}<text x="1360" y={y + 4}>{label}</text>{/each}
                <text x="1360" y="372">100</text>
                <text x="1360" y="392">0</text>
                <text x="1360" y="413">-100</text>
                <text x="1360" y="445">0</text>
                <text class="ghost" x="970" y="49">AFT Price-,&nbsp; AFT 102 Signals - Dynamic Trend-fast</text>
                <text x="969" y="371">AFT 150 Signals - AlphaWebTrader-AWT</text>
                <text class="ghost" x="967" y="442">AFT 002 Algo - Signals Generics-AWT</text>
                {@render tag(1345, 100, 1410, '15389.00', '#000', '#fff')}
                {@render tag(1345, 126, 1410, '15382.75', '#000', '#fff')}
                {@render tag(1345, 206, 1410, '15364.00', '#000', '#fff')}
                {@render cross(1324, 198)}
                <path d="M1096 198h70l5 8-5 7h-70z" fill="#000" stroke="#ccc" />
                <text x="1101" y="209" fill="#fff">3s&nbsp; Sell STP</text>
                <path d="M1173 91h58v18h-58z" fill="#222" stroke="#ccc" />
                <path d="M1231 91h17v18h-17z" fill="#00d20a" stroke="#ccc" />
                <text x="1194" y="104" fill="#f00">-25</text>
                <text x="1236" y="104" fill="#222">3</text>
              </g>
            </svg>
            {@render scroller('tiny')}
          </div>
          {@render tabs(['MES 09-23', 'MYM 09-23', 'MNQ 09-23', 'M2K 09-23'], 2, 'roomy')}
        </section>

        <section class="alerts">
          <div class="bar"><h2 class="plate clipped">Alerts Log</h2></div>
          <table>
            <thead><tr><th>Instrument</th><th>Message</th></tr></thead>
            <tbody>
              {#each alerts as [inst, message]}<tr><td>{inst}</td><td>{message}</td></tr>{/each}
            </tbody>
          </table>
        </section>
      </div>

      <section class="trader">
        <header>
          <svg viewBox="0 0 16 16"><path d="M0 0h7v16H0zM9 0h7v16H9z" fill="#7ee07e" /><path d="M0 3h3v3H0zM4 0h3v3H4zM9 7h3v3H9zM13 2h3v5h-3z" fill="#f08060" /><path d="M9 0h3v6H9z" fill="#e8dfc8" /></svg>
          ATS.AlphaWebTrader.Desktop v:2023.6.4.1 T:11:45:36 AM
        </header>
        <div class="watchlist">
          <label for="watchlist">WatchList:</label>
          <div class="pick light">
            <select id="watchlist"><option>000 Default</option></select>
            <svg viewBox="0 0 8 4"><path d="M0 0h8L4 4z" /></svg>
          </div>
          <div class="blank"></div>
        </div>
        <nav>
          {#each ['Trade View Point', 'AlphaBias', 'Signals', 'EcoNews', 'Instruments', 'Inst. Analysis'] as name, i}
            <button class:on={i === 0}>{name}</button>
          {/each}
        </nav>
        <div class="grid">
          <table>
            <colgroup>
              {#each [16, 63, 54, 45, 45, 45, 41, 40, 41, 36, 43, 15] as w}<col style="width:{(w / 484) * 100}%" />{/each}
            </colgroup>
            <thead>
              <tr>
                <th></th>
                {#each watchCols as name}
                  <th>{name}{#if name === 'SFG'}<svg class="sort" viewBox="0 0 8 4"><path d="M0 0h8L4 4z" /></svg>{/if}</th>
                {/each}
              </tr>
            </thead>
            <tbody>
              {#each watch as row}
                <tr class:picked={row[0] === 'ES'}>
                  <td class="gutter">{#if row[0] === 'ES'}<svg viewBox="0 0 4 8"><path d="M0 0v8l4-4z" /></svg>{/if}</td>
                  <td>{row[0]}</td>
                  {#each row.slice(1, 8) as v, i}
                    <td class="num {tone(i, v as number)}">{v}</td>
                  {/each}
                  <td class={row[9]}>{row[8]}</td>
                  <td class={row[10] === 'Buy' ? 'up' : 'down'}>{row[10]}</td>
                  <td></td>
                </tr>
              {/each}
            </tbody>
          </table>
        </div>
        {@render caption('over-bias', ['all red or all', 'green'])}
        {@render caption('over-glance', ['at a glance', 'elect a bias', 'long or', 'short based', 'on related', 'indices/ etfs', 'and tech'])}
      </section>
    </div>

    <section class="analyzer">
      <div class="bar">
        <h2 class="plate clipped">Market Analyzer</h2>
        <div class="space"></div>
        <div class="winbtns">
          <button class="win pale" aria-label="Link"></button>
          <button class="win dull" aria-label="Minimize"><svg viewBox="0 0 14 14"><path d="M3 10h8" /></svg></button>
          <button class="win dull" aria-label="Maximize"><svg viewBox="0 0 14 14"><path d="M3 3h8v8H3zM3 4h8" /></svg></button>
          <button class="win dull" aria-label="Close"><svg viewBox="0 0 14 14"><path d="M4 4l6 6M10 4l-6 6" /></svg></button>
        </div>
      </div>
      <table>
        <thead><tr>{#each marketCols as name}<th>{name}</th>{/each}</tr></thead>
        <tbody>
          <tr class="total">{#each totals as v}<td>{v}</td>{/each}</tr>
          {#each market as row}
            <tr>{#each row as v, i}<td class={marketTone(row, i)}>{v}</td>{/each}</tr>
          {/each}
        </tbody>
      </table>
      {@render tabs(['AFT8 UDSFG DAY', 'AFT8 UDSFG', 'AFT8 UDSFG GAP', 'AFT8 UDSFG GAP', 'AFT8 WSFG', 'AFT8 Trend AWT', 'EnergyTrader001'], 1, 'wide')}
      {@render caption('over-system', ['Algo', 'Entry', 'System'])}
      {@render caption('over-man', ['Algo', 'Trade', 'Man'])}
    </section>
  </div>

  <div class="remote">
    <button aria-label="Pin bar" class="pin"><svg viewBox="0 0 12 12"><path d="M0 6h5M5 1v10M6 4h5M6 7h5M11 1v10" /></svg></button>
    <svg class="signal" viewBox="0 0 12 12"><path d="M1 12V9M4 12V7M7 12V4M10 12V1" /></svg>
    <span>207.244.233.154</span>
    <button aria-label="Minimize session"><svg viewBox="0 0 10 10"><path d="M1 9h7" /></svg></button>
    <button aria-label="Restore session"><svg viewBox="0 0 10 10"><path d="M3 3V1h6v5H7M1 4h5v5H1z" /></svg></button>
    <button aria-label="Close session"><svg viewBox="0 0 10 10"><path d="M1 1l8 8M9 1L1 9" /></svg></button>
  </div>
</div>

<style>
  :global(body) { background: #2d2d30; }

  .workspace {
    position: relative;
    display: grid;
    grid-template-columns: minmax(0, 957fr) minmax(0, 958fr);
    height: 100vh;
    min-height: 860px;
    overflow: hidden;
    background: #2d2d30;
    color: #ccc;
    font-family: "Liberation Sans", Arial, sans-serif;
    font-size: 12px;
  }
  .workspace :is(button, select, input) { font: inherit; color: inherit; margin: 0; padding: 0; border: 0; border-radius: 0; background: none; }
  .workspace :is(h2) { margin: 0; font-weight: 400; }
  table { border-collapse: collapse; table-layout: fixed; width: 100%; }
  th { font-weight: 400; text-align: left; }
  th, td { padding: 0; overflow: hidden; white-space: nowrap; }
  .space { flex: 1; }

  .left, .right { display: flex; flex-direction: column; min-width: 0; min-height: 0; }
  .window { position: relative; display: flex; flex-direction: column; }
  .left .window { padding-left: 8px; }
  .day { padding-right: 5px; border-bottom: 2px solid #222; }
  .hour { padding-right: 1px; padding-bottom: 8px; z-index: 2; }

  /* title bars */
  .bar { display: flex; align-items: center; height: 25px; background: #4d4d4d; border-bottom: 1px solid #3a3a3d; box-sizing: border-box; }
  .left .bar { margin: 0 -5px 7px -6px; }
  .hour .bar { margin: 0 0 6px -6px; background: #1f1f1f; }
  .plate { align-self: stretch; display: flex; align-items: center; padding: 0 6px 0 5px; background: linear-gradient(#a51f26, #74191c); color: #fff; font-size: 15px; }
  .plate.clipped { padding: 0 6px 0 0; font-size: 14px; text-indent: -4px; overflow: hidden; }
  .pick { display: grid; align-items: center; width: 125px; height: 19px; background: #3f3f46; }
  .plate + .pick { margin: 0 6px 0 18px; }
  .pick select { grid-area: 1 / 1; appearance: none; width: 100%; height: 100%; outline: 0; }
  .workspace .pick select { padding-left: 5px; }
  .pick svg { grid-area: 1 / 1; justify-self: end; width: 10px; height: 7px; margin-right: 6px; fill: none; stroke: #ddd; stroke-width: 2; pointer-events: none; }
  .tools { display: flex; margin-left: 5px; }
  .tool { display: grid; place-items: center; width: 28px; height: 20px; }
  .tool svg { width: 18px; height: 18px; fill: none; stroke: #ccc; stroke-width: 1; }
  .tool.off { opacity: 0.35; }
  .winbtns { display: flex; gap: 3px; }
  .win { display: grid; place-items: center; box-sizing: border-box; width: 16px; height: 16px; }
  .workspace .win { border: 1px solid #aaa; background: #222; color: #fff; }
  .workspace .win.pale { background: linear-gradient(#ddd, #aaa6a8); }
  .workspace .win.red { background: #b41f28; }
  .workspace .win.dull { background: #4d4d4d; }
  .workspace .win.corner { background: #444; margin-right: 2px; }
  .win svg { width: 14px; height: 14px; fill: none; stroke: #ddd; stroke-width: 2; }

  /* charts */
  .frame { background: #222; }
  .chart { display: block; width: 100%; height: auto; }
  .wire { fill: none; stroke: #ccc; stroke-width: 1; }
  .axis { font-size: 11px; fill: #ccc; }
  .ghost { fill: #d3d3d3; fill-opacity: 0.8; }
  .strong { font-weight: 700; }
  .mono { font-family: "Liberation Mono", "Courier New", monospace; font-size: 12px; fill: #000; }

  .scroller { display: flex; align-items: center; height: 14px; background: #333337; }
  .workspace .scroller button { width: 9px; height: 12px; background: #000; }
  .scroller svg { display: block; width: 9px; height: 12px; fill: #fff; }
  .thumb { height: 12px; border: 1px solid #777; background: linear-gradient(#444, #666); box-sizing: border-box; }
  .thumb.short { width: 36px; }
  .thumb.long { width: 75px; }
  .thumb.tiny { width: 8px; }

  .tabs { display: flex; gap: 1px; height: 22px; margin-top: 1px; padding-left: 20px; font-size: 13px; }
  .tab { height: 21px; }
  .workspace .tab { padding: 0 13px 0 6px; background: #3f3f46; }
  .workspace .tab.active { background: #222; border: 1px solid #0e77c8; border-top: 0; color: #0e77c8; }
  .workspace .roomy .tab { padding: 0 13px 0 10px; }
  .workspace .tab.plus { padding: 0 6px; width: 23px; }
  .workspace .roomy .tab.plus { width: 31px; padding: 0 10px; }
  .workspace .roomy .nudge { padding: 0; width: 17px; color: #666; }
  .workspace .roomy .nudge.lit { color: #ddd; }
  .plus svg { display: block; width: 11px; height: 11px; stroke: #ddd; stroke-width: 2; }

  /* captions written over the windows */
  .caption { position: absolute; overflow: visible; z-index: 5; pointer-events: none; font-size: 31px; filter: drop-shadow(2px 3px 3px rgb(0 0 0 / 0.6)); }
  .caption text { text-anchor: middle; fill: #fff; stroke: #000; stroke-width: 9px; stroke-linejoin: round; paint-order: stroke; }
  .over-day { left: 24.5%; top: 219px; }
  .over-hour { left: 69.4%; top: 217px; }
  .over-controller { left: 10%; top: 105px; }
  .over-bias { left: 57.7%; top: 219px; }
  .over-glance { left: 57.7%; top: 327px; }
  .over-system { left: 13.3%; top: 169px; }
  .over-man { left: 94%; top: 188px; }
  .pointers { position: absolute; left: 61.2%; top: 322px; width: 100px; height: 55px; overflow: visible; fill: none; stroke-width: 26; stroke-linecap: round; filter: drop-shadow(2px 3px 2px rgb(0 0 0 / 0.5)); }
  .pointers path[fill] { stroke-width: 0; }

  /* entry controller */
  .controller { position: relative; flex: 1; min-height: 0; display: flex; flex-direction: column; margin: 0 3px 0 2px; border: solid #0b2038; border-width: 0 3px 0 4px; background: #fff; color: #111; font-family: "Open Sans", "Segoe UI", sans-serif; font-size: 14px; }
  .cut { display: flex; gap: 127px; height: 5px; padding-left: 57px; }
  .cut span { width: 33px; background: #c3dffb; }
  .cut span + span { width: 48px; }
  .filters { display: flex; gap: 7px; padding: 7px 0 4px 15px; border-bottom: 1px solid #6f93b8; }
  .filter { height: 25px; box-sizing: border-box; }
  .workspace .filter { padding: 0 2px; border: 1px solid transparent; }
  .workspace .filter.on { background: #c3dffb; border-color: #e4e4e4; }
  .algo-body { display: flex; flex: 1; min-height: 0; overflow: hidden; }
  .algos { flex: 1; min-width: 0; width: 0; align-self: flex-start; }
  .algos thead tr { height: 31px; background: linear-gradient(#fff 40%, #eff0f2 41%); }
  .algos tbody tr { height: 27px; }
  .algos th { padding-left: 5px; border-right: 1px solid #ddd; }
  .algos td { padding-left: 3px; border: 1px solid #000; line-height: 20px; height: 26px; box-sizing: border-box; }
  .algos .mid { padding-left: 8px; }
  .algos td.mid { border-left: 7px solid #f4f4f4; padding-left: 1px; }
  .algos .act { padding: 1px; }
  .age { background: #90ee90; }
  .age.neg { background: #ff8080; }
  .colbox { display: flex; align-items: center; gap: 6px; color: #bbb; }
  .box { appearance: none; display: grid; place-items: center; width: 12px; height: 12px; box-sizing: border-box; }
  .workspace .box { background: #3f3f46; border: 1px solid #555; }
  .workspace .box.yellow { background: #ff0; }
  .workspace .box.green { background: #90ee90; }
  .workspace .box.orange { background: #ffa07a; }
  .box:checked::before { content: ""; width: 8px; height: 7px; background: #ddd; clip-path: polygon(0 50%, 15% 35%, 40% 60%, 85% 5%, 100% 20%, 40% 100%); }
  .side, .dots { display: block; width: 100%; height: 24px; box-sizing: border-box; overflow: hidden; }
  .workspace .side { border: 1px solid #777; }
  .workspace .side.long { background: #80ff80; }
  .workspace .side.short { background: #ff8080; }
  .workspace .dots { background: #ddd; border: 1px solid #999; }
  .vscroll { display: flex; flex-direction: column; width: 14px; margin-top: 31px; background: #333337; }
  .workspace .vscroll button { height: 10px; background: #000; }
  .vscroll svg { display: block; width: 13px; height: 10px; fill: #fff; }
  .vthumb { height: 20px; border: 1px solid #777; background: linear-gradient(90deg, #444, #666); box-sizing: border-box; }

  /* right half */
  .upper { display: grid; grid-template-columns: minmax(0, 461fr) minmax(0, 497fr); height: 704px; flex: none; }
  .middle { display: flex; flex-direction: column; min-width: 0; min-height: 0; overflow: hidden; }
  .renko { padding: 0 7px 9px 4px; }
  .renko .bar { margin: 0 -7px 8px 0; }
  .alerts { flex: 1; min-height: 0; overflow: hidden; margin-left: 8px; }
  .alerts .bar { height: 21px; margin-bottom: 6px; }
  .alerts table { background: #1e1e1e; border-top: 1px solid #3f3f46; }
  .alerts th { height: 27px; padding-left: 6px; border-bottom: 1px solid #3f3f46; }
  .alerts th:first-child, .alerts td:first-child { width: 65px; padding-left: 4px; border-right: 1px solid #3f3f46; }
  .alerts td { height: 21px; padding-left: 6px; color: #0a8a0a; }

  .trader { position: relative; overflow: hidden; margin-left: 1px; background: #fff; color: #333; font-family: "Open Sans", "Segoe UI", sans-serif; font-size: 11px; }
  .trader header { display: flex; align-items: center; gap: 6px; height: 31px; padding-left: 8px; color: #999; font-size: 11px; }
  .trader header svg { width: 16px; height: 16px; }
  .watchlist { display: flex; align-items: center; height: 25px; }
  .watchlist label { width: 91px; }
  .pick.light { width: auto; flex: 1; height: 25px; box-sizing: border-box; background: #fff; border: 1px solid #aaa; }
  .pick.light svg, .sort { width: 8px; height: 4px; fill: #333; stroke: none; }
  .blank { flex: none; width: 42px; height: 23px; border: 1px solid #aaa; border-right: 0; }
  nav { display: flex; height: 23px; }
  .workspace nav button { padding: 0 12px; border-bottom: 1px solid #aaa; }
  .workspace nav button.on { color: #0072c6; background: #f7f7f7; border: 1px solid #aaa; border-bottom-color: #f7f7f7; }
  .workspace nav button:last-child { flex: 1; }
  .grid { padding: 11px 0 0 12px; background: #f7f7f7; }
  .grid table { background: #fff; }
  .grid th { height: 20px; padding-left: 4px; border: 1px solid #aaa; background: #f7f7f7; text-overflow: clip; }
  .sort { float: right; margin: 6px 7px 0 0; }
  .grid td { height: 20px; padding: 0 4px; border: 1px solid #d3d3d3; line-height: 18px; }
  .grid td.gutter { border: 0; border-left: 1px solid #aaa; border-right: 1px solid #d3d3d3; padding: 0 6px; }
  .gutter svg { display: block; width: 4px; height: 8px; }
  .num { text-align: right; }
  .up { background: #90ee90; }
  .down { background: #ffa07a; }
  .warm { background: #f5f3dc; }
  .flat { background: #d3d3d3; }
  .dim { background: #808080; color: #4a4a4a; }
  .picked td:not(.gutter) { background: #e5f1fb; }

  .analyzer { position: relative; flex: 1; min-height: 0; overflow: hidden; padding: 0 6px 0 8px; border-top: 1px solid #3f3f46; box-sizing: border-box; }
  .analyzer .bar { height: 23px; margin: 0 -6px 7px 0; padding-right: 4px; }
  .analyzer table { background: #1e1e1e; font-size: 10px; color: #fff; }
  .analyzer th { height: 25px; padding-left: 6px; border: solid #3f3f46; border-width: 1px 1px 1px 0; color: #ccc; }
  .analyzer td { height: 17px; padding-left: 6px; border-right: 1px solid #3f3f46; line-height: 16px; }
  .analyzer :is(th, td):first-child { width: 72px; padding-left: 3px; }
  .total td { background: #8e6500; }
  td.yellow { background: #ff0; color: #111; }
  td.long { background: #00d20a; }
  td.short { background: #b40000; }
  td.loss { color: #d80000; }
  td.gain { color: #32cd32; }
  .analyzer .tabs { padding-left: 17px; margin-top: 0; }

  /* remote session bar */
  .remote { position: absolute; left: 44%; top: 0; width: 30%; height: 26px; z-index: 6; display: flex; align-items: center; gap: 12px; padding: 0 34px 0 37px; box-sizing: border-box; background: linear-gradient(#7aa7d8, #3d74b8 46%, #053b82 50%, #0a4796 92%, #b8cfe8 93%); clip-path: polygon(0 0, 100% 0, 96% 100%, 4% 100%); color: #e6eef8; font-size: 12px; }
  .remote span { flex: 1; text-align: center; }
  .remote svg { display: block; width: 12px; height: 12px; fill: none; stroke: #fff; stroke-width: 2; }
  .remote .signal { flex: none; margin-right: 22px; }
</style>
